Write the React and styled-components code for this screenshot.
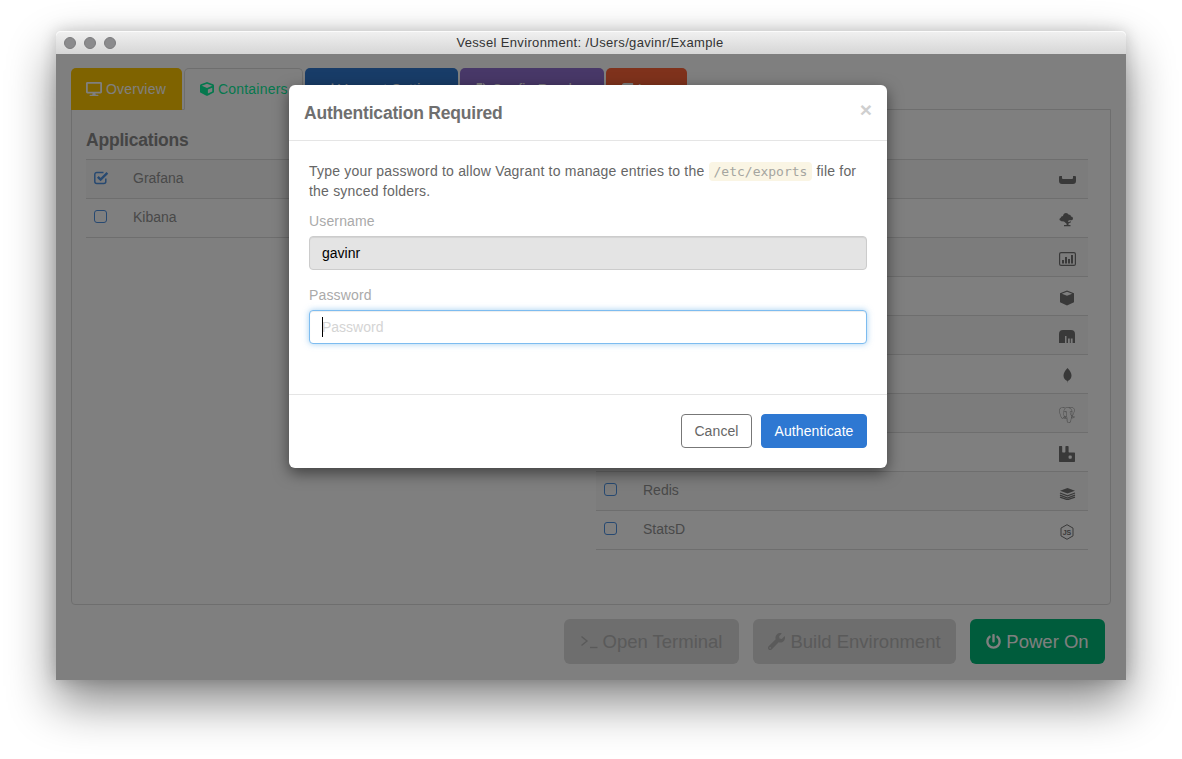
import React from "react";
import styled, { createGlobalStyle } from "styled-components";
import { FaDesktop, FaCube, FaWrench, FaPowerOff, FaFileAlt, FaSignal, FaBook } from "react-icons/fa";
import { SiPostgresql, SiRabbitmq } from "react-icons/si";

const GlobalStyle = createGlobalStyle`
  html, body {
    margin: 0;
    background: #fff;
    font-family: "Liberation Sans", Arial, sans-serif;
  }
  * { box-sizing: border-box; }
`;

const Page = styled.div`
  width: 1182px;
  height: 759px;
  padding: 31px 56px 0;
  overflow: hidden;
`;

const Window = styled.div`
  height: 649px;
  display: flex;
  flex-direction: column;
  border-radius: 5px 5px 0 0;
  background: #fff;
  box-shadow: 0 22px 48px rgba(0, 0, 0, 0.48), 0 0 16px rgba(0, 0, 0, 0.18);
`;

const TitleBar = styled.div`
  height: 23px;
  flex: none;
  display: grid;
  grid-template-columns: 1fr auto 1fr;
  align-items: center;
  padding: 0 10px 0 8px;
  border-radius: 5px 5px 0 0;
  background: linear-gradient(#f1f1f1, #d6d6d6);
  box-shadow: inset 0 1px 0 #fbfbfb;
`;

const Lights = styled.div`
  display: flex;
  gap: 8px;
`;

const Light = styled.span`
  width: 12px;
  height: 12px;
  border-radius: 50%;
  background: #8b8b8d;
  border: 1px solid #7c7c7e;
`;

const Title = styled.div`
  font-size: 13px;
  color: #333;
  letter-spacing: 0.35px;
`;

const Content = styled.div`
  position: relative;
  flex: 1;
  padding: 14px 15px 16px;
  display: flex;
  flex-direction: column;
  overflow: hidden;
`;

const Tabs = styled.div`
  display: flex;
  gap: 2px;
  margin-bottom: -1px;
  position: relative;
  height: 42px;
`;

const Tab = styled.div`
  width: ${(p) => p.$w}px;
  display: flex;
  align-items: center;
  gap: 4px;
  padding: 0 0 0 15px;
  font-size: 14px;
  letter-spacing: 0.2px;
  white-space: nowrap;
  border-radius: 5px 5px 0 0;
  color: ${(p) => (p.$active ? "#0cf09c" : "#fff")};
  background: ${(p) => p.$bg || "#fff"};
  border: ${(p) => (p.$active ? "1px solid #ddd" : "none")};
  border-bottom-color: #fff;
  svg { flex: none; }
`;

const Pane = styled.div`
  height: 496px;
  padding: 20px 22px 0 14px;
  border: 1px solid #ddd;
  border-radius: 0 0 4px 4px;
  display: grid;
  grid-template-columns: 492px 492px;
  column-gap: 18px;
  background: #fff;
`;

const Heading = styled.h3`
  margin: 0 0 8px;
  min-height: 21px;
  font-size: 17.5px;
  line-height: 21px;
  font-weight: bold;
  letter-spacing: -0.2px;
  color: #8a8a8a;
`;

const Row = styled.div`
  height: 39px;
  display: flex;
  align-items: center;
  padding: 0 12px 3px 8px;
  border-top: 1px solid #ddd;
  font-size: 14px;
  color: #929292;
  background: ${(p) => (p.$odd ? "#f9f9f9" : "#fff")};
  &:last-child { height: 40px; border-bottom: 1px solid #ddd; }
`;

const Box = styled.span`
  width: 13px;
  height: 13px;
  border-radius: 3px;
  border: 1.5px solid #4f92e2;
  flex: none;
`;

const CheckHolder = styled.span`
  width: 39px;
  flex: none;
  display: flex;
`;

const Name = styled.span`
  flex: 1;
`;

const IconSlot = styled.span`
  width: 18px;
  height: 18px;
  margin-top: 6px;
  display: flex;
  align-items: center;
  justify-content: center;
  color: #727272;
  flex: none;
`;

const Actions = styled.div`
  display: flex;
  justify-content: flex-end;
  gap: 14px;
  margin-top: 14px;
  padding-right: 6px;
`;

const BigButton = styled.div`
  height: 45px;
  width: ${(p) => p.$w}px;
  border-radius: 6px;
  display: flex;
  align-items: center;
  justify-content: center;
  gap: 5px;
  font-size: 18.5px;
  background: ${(p) => (p.$go ? "#00b878" : "#dcdcdc")};
  color: ${(p) => (p.$go ? "#fff" : "#b4b4b4")};
`;

const Backdrop = styled.div`
  position: absolute;
  inset: 0;
  background: rgba(0, 0, 0, 0.5);
`;

const Modal = styled.div`
  position: absolute;
  left: 233px;
  top: 31px;
  width: 598px;
  height: 383px;
  background: #fff;
  border-radius: 6px;
  box-shadow: 0 5px 15px rgba(0, 0, 0, 0.5);
  display: flex;
  flex-direction: column;
`;

const ModalHead = styled.div`
  height: 56px;
  flex: none;
  padding: 1px 15px 0;
  display: flex;
  align-items: center;
  justify-content: space-between;
  border-bottom: 1px solid #e5e5e5;
`;

const ModalTitle = styled.h4`
  margin: 0;
  font-size: 17.5px;
  font-weight: bold;
  color: #6f6f6f;
  letter-spacing: -0.2px;
`;

const Close = styled.span`
  font-size: 21px;
  line-height: 1;
  font-weight: bold;
  color: #cfcfcf;
  margin-top: -7px;
`;

const ModalBody = styled.div`
  flex: 1;
  padding: 20px 20px 0;
`;

const Intro = styled.p`
  margin: 0 0 10px;
  font-size: 14px;
  line-height: 20px;
  letter-spacing: 0.2px;
  color: #666;
`;

const Code = styled.code`
  font-family: "DejaVu Sans Mono", monospace;
  font-size: 13px;
  line-height: 1;
  letter-spacing: 0;
  padding: 2px 5px;
  border-radius: 4px;
  background: #faf5e4;
  color: #a5a5a0;
`;

const Label = styled.label`
  display: block;
  margin-bottom: 5px;
  font-size: 14px;
  line-height: 20px;
  letter-spacing: 0.15px;
  color: #aaa;
`;

const Field = styled.div`
  position: relative;
  margin-bottom: 15px;
`;

const Input = styled.input`
  display: block;
  width: 100%;
  height: 34px;
  padding: 6px 12px;
  border-radius: 4px;
  outline: none;
  font: 14px "Liberation Sans", Arial, sans-serif;
  color: #000;
  background: ${(p) => (p.$focus ? "#fff" : "#e4e4e4")};
  border: 1px solid ${(p) => (p.$focus ? "#7dbcf0" : "#ccc")};
  box-shadow: ${(p) =>
    p.$focus
      ? "inset 0 1px 1px rgba(0,0,0,.075), 0 0 6px rgba(102,175,233,.6)"
      : "inset 0 1px 1px rgba(0,0,0,.075)"};
  &::placeholder { color: #d4d4d4; opacity: 1; }
`;

const Caret = styled.span`
  position: absolute;
  left: 13px;
  bottom: 7px;
  width: 1px;
  height: 20px;
  background: #000;
`;

const ModalFoot = styled.div`
  flex: none;
  height: 74px;
  padding: 19px 20px 20px;
  border-top: 1px solid #e5e5e5;
  display: flex;
  justify-content: flex-end;
  gap: 9px;
`;

const Btn = styled.button`
  height: 34px;
  width: ${(p) => p.$w}px;
  padding: 0;
  border-radius: 4px;
  font: 14px "Liberation Sans", Arial, sans-serif;
  letter-spacing: 0.1px;
  border: 1px solid ${(p) => (p.$primary ? "#2e78d2" : "#777")};
  background: ${(p) => (p.$primary ? "#2e78d2" : "#fff")};
  color: ${(p) => (p.$primary ? "#fff" : "#666")};
`;

const CheckedBox = () => (
  <svg width="15" height="14" viewBox="0 0 15 14" fill="none" stroke="#4f92e2">
    <path d="M11.8 7.5V10.5a2 2 0 0 1-2 2H2.8a2 2 0 0 1-2-2V3.5a2 2 0 0 1 2-2H9.5" strokeWidth="1.5" />
    <path d="M3.8 5.8L6.6 8.6L13.4 1.8" strokeWidth="2.4" />
  </svg>
);

const TrayIcon = () => (
  <svg width="17" height="9" viewBox="0 0 17 9" fill="currentColor">
    <path d="M1 0h2v2q0 1 1 1h9q1 0 1-1V0h2q1 0 1 1v4q0 3-3 3H3Q0 8 0 5V1q0-1 1-1z" />
  </svg>
);

const TreeIcon = () => (
  <svg width="16" height="14" viewBox="0 0 16 14" fill="currentColor">
    <path d="M7 0q2 0 2.500 1.600Q12 1.600 12 3.500q2 0 2 2T12 7.200H9.800L9 9h.8l2.200-.8v1L9.500 10.500V12h2v1.200H5V12h2.600V10.800L5 8.500Q2 8.500.5 7 0 5.500 1.700 4.800 2 3 4 3q.5-3 3-3z" />
  </svg>
);

const ChartIcon = () => (
  <svg width="17" height="14" viewBox="0 0 17 14" fill="currentColor">
    <rect x="0.6" y="0.6" width="15.800" height="12.800" rx="1.500" fill="none" stroke="currentColor" strokeWidth="1.200" />
    <rect x="3" y="8" width="2" height="3.500" />
    <rect x="6" y="5" width="2" height="6.500" />
    <rect x="9" y="7" width="2" height="4.500" />
    <rect x="12" y="3" width="2" height="8.500" />
  </svg>
);

const BoxIcon = () => (
  <svg width="16" height="16" viewBox="0 0 16 16" fill="currentColor">
    <path d="M8 .5l7 2.800v9L8 15.500 1 12.300v-9zM8 1.800L2.800 3.800 8 5.800l5.200-2z" fillRule="evenodd" />
  </svg>
);

const StoreIcon = () => (
  <svg width="16" height="13" viewBox="0 0 16 13" fill="currentColor">
    <path d="M4 0h8q4 0 4 4v9h-2.400V8.500h-1.800V13h-1V8.500H9V13H7.500V6H6v7H0V4q0-4 4-4z" />
  </svg>
);

const LeafIcon = () => (
  <svg width="9" height="15" viewBox="0 0 9 15" fill="currentColor">
    <path d="M4.500 0Q8.500 4 8.500 7.500 8.500 11 4.800 13L4.500 15 4.200 13Q.5 11 .5 7.500.5 4 4.500 0z" />
  </svg>
);

const StackIcon = () => (
  <svg width="17" height="14" viewBox="0 0 17 14" fill="none" stroke="currentColor" strokeWidth="1.300">
    <path d="M8.500 2L16 4.800 8.500 7.600 1 4.800z" fill="currentColor" stroke="none" />
    <path d="M1 7l7.500 2.800L16 7" />
    <path d="M1 9.200l7.500 2.800L16 9.200" />
    <path d="M1 11.200l7.500 2.500L16 11.200" />
  </svg>
);

const NodeIcon = () => (
  <svg width="14" height="16" viewBox="0 0 14 16" fill="none" stroke="currentColor" strokeWidth="1">
    <path d="M7 .7l6 3.400v7.800l-6 3.400-6-3.400V4.100z" />
    <text x="7" y="10.500" textAnchor="middle" fontSize="7" fontFamily="Liberation Sans, sans-serif" fill="currentColor" stroke="none" fontWeight="bold">JS</text>
  </svg>
);

const TerminalGlyph = () => (
  <svg width="17" height="15" viewBox="0 0 17 15" fill="none" stroke="currentColor" strokeWidth="1.400">
    <path d="M0.500 2.500L6 7L0.500 11.500" />
    <path d="M9 13.500H16.500" />
  </svg>
);

// the first eight names sit behind the dialog in the reference
const services = [
  { id: "tray", icon: <TrayIcon /> },
  { id: "tree", icon: <TreeIcon /> },
  { id: "chart", icon: <ChartIcon /> },
  { id: "box", icon: <BoxIcon /> },
  { id: "store", icon: <StoreIcon /> },
  { id: "leaf", icon: <LeafIcon /> },
  { id: "elephant", icon: <SiPostgresql size={16} color="#8f8f8f" /> },
  { id: "rabbit", icon: <SiRabbitmq size={16} /> },
  { id: "redis", name: "Redis", icon: <StackIcon /> },
  { id: "statsd", name: "StatsD", icon: <NodeIcon /> },
];

export default function App() {
  return (
    <Page>
      <GlobalStyle />
      <Window>
        <TitleBar>
          <Lights>
            <Light />
            <Light />
            <Light />
          </Lights>
          <Title>Vessel Environment: /Users/gavinr/Example</Title>
        </TitleBar>
        <Content>
          <Tabs>
            <Tab $w={111} $bg="#ffc600"><FaDesktop size={16} />Overview</Tab>
            <Tab $w={119} $active><FaCube size={14} />Containers</Tab>
            <Tab $w={153} $bg="#3078d0"><FaSignal size={14} />Vagrant Settings</Tab>
            <Tab $w={144} $bg="#9070d0"><FaFileAlt size={13} />Config Reader</Tab>
            <Tab $w={81} $bg="#ff6438"><FaBook size={13} />Logs</Tab>
          </Tabs>
          <Pane>
            <div>
              <Heading>Applications</Heading>
              <Row $odd>
                <CheckHolder><CheckedBox /></CheckHolder>
                <Name>Grafana</Name>
              </Row>
              <Row>
                <CheckHolder><Box /></CheckHolder>
                <Name>Kibana</Name>
              </Row>
            </div>
            <div>
              <Heading />
              {services.map((s, i) => (
                <Row key={s.id} $odd={i % 2 === 0}>
                  <CheckHolder><Box /></CheckHolder>
                  <Name>{s.name}</Name>
                  <IconSlot>{s.icon}</IconSlot>
                </Row>
              ))}
            </div>
          </Pane>
          <Actions>
            <BigButton $w={175}><TerminalGlyph />Open Terminal</BigButton>
            <BigButton $w={203}><FaWrench size={17} />Build Environment</BigButton>
            <BigButton $w={135} $go><FaPowerOff size={15} />Power On</BigButton>
          </Actions>
          <Backdrop />
          <Modal>
            <ModalHead>
              <ModalTitle>Authentication Required</ModalTitle>
              <Close>×</Close>
            </ModalHead>
            <ModalBody>
              <Intro>
                Type your password to allow Vagrant to manage entries to the <Code>/etc/exports</Code> file for the synced folders.
              </Intro>
              <Field>
                <Label>Username</Label>
                <Input readOnly value="gavinr" />
              </Field>
              <Field>
                <Label>Password</Label>
                <Input $focus readOnly placeholder="Password" />
                <Caret />
              </Field>
            </ModalBody>
            <ModalFoot>
              <Btn $w={71}>Cancel</Btn>
              <Btn $w={106} $primary>Authenticate</Btn>
            </ModalFoot>
          </Modal>
        </Content>
      </Window>
    </Page>
  );
}
